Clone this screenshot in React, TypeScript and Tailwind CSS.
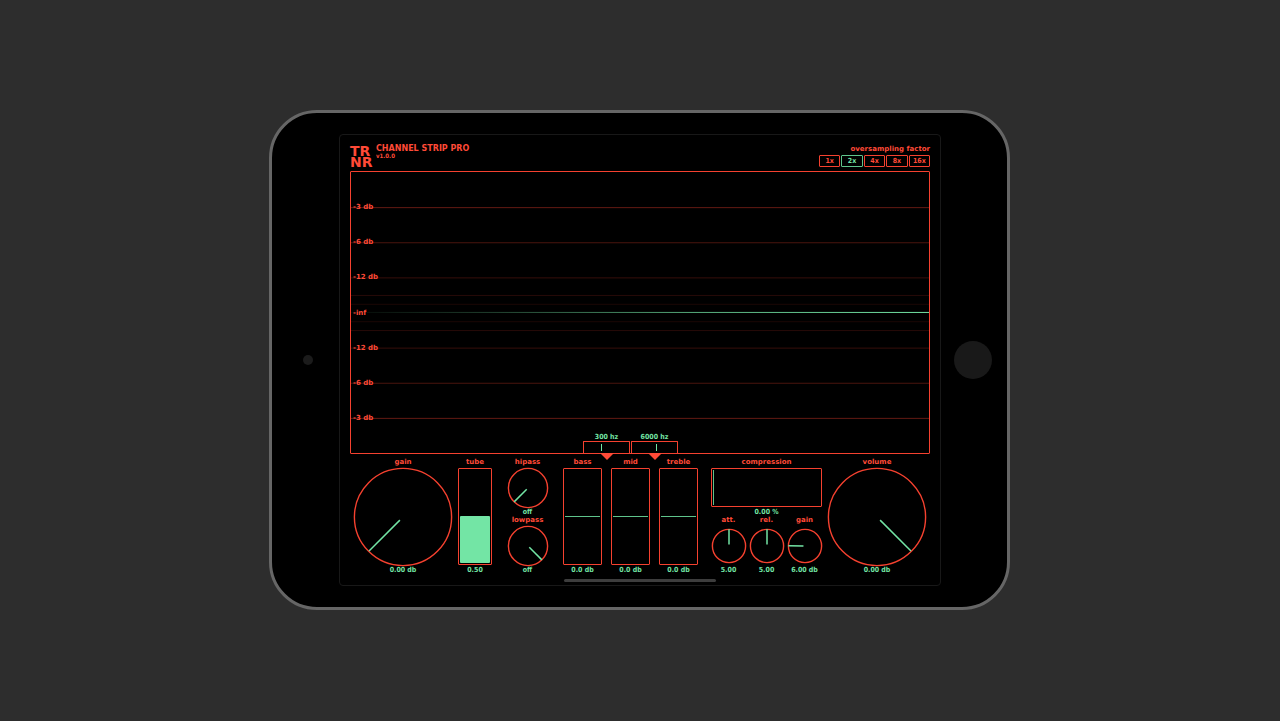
import React, { useState } from "react";

type ControlProps = {
  label: string;
  display: string;
  value: number;
};

const labelClass = "block text-center text-[7px] leading-[8px] font-bold whitespace-nowrap text-[#ff4a37]";
const valueClass =
  "block text-center font-['DejaVu_Sans_Condensed','DejaVu_Sans',sans-serif] font-stretch-condensed text-[7px] leading-[8px] font-bold whitespace-nowrap text-[#73e5a5]";
const hiddenRange = "absolute inset-0 m-0 h-full w-full cursor-pointer opacity-0";

function Dial({ label, angle, radius }: { label: string; angle: number; radius: number }) {
  const box = radius * 2;
  const rad = (angle * Math.PI) / 180;
  const dx = Math.sin(rad);
  const dy = -Math.cos(rad);
  const inner = radius * 0.09;
  const outer = radius * 0.98;
  return (
    <div className="relative flex min-h-0 w-full flex-1 items-center justify-center">
      <svg
        width={box}
        height={box}
        viewBox={`${-radius} ${-radius} ${box} ${box}`}
        className="shrink-0 overflow-visible"
        aria-hidden="true"
      >
        <circle r={radius - 0.4} fill="none" stroke="#f5412f" strokeWidth="1.4" />
        <line x1={dx * inner} y1={dy * inner} x2={dx * outer} y2={dy * outer} stroke="#73e5a5" strokeWidth="1.5" />
      </svg>
      <input type="range" aria-label={label} min={-180} max={180} defaultValue={angle} className={hiddenRange} />
    </div>
  );
}

function Knob({ label, display, value, radius }: ControlProps & { radius: number }) {
  return (
    <div className="flex h-full flex-col">
      <span className={labelClass}>{label}</span>
      <div className="mt-[2px] mb-px flex min-h-0 flex-1">
        <Dial label={label} angle={value} radius={radius} />
      </div>
      <span className={valueClass}>{display}</span>
    </div>
  );
}

function Fader({ label, display, value, filled = false }: ControlProps & { filled?: boolean }) {
  return (
    <div className="flex h-full flex-col">
      <span className={labelClass}>{label}</span>
      <div className="relative mt-[2px] mb-px flex flex-1 flex-col justify-end rounded-[1px] border border-[#f5412f] p-px">
        <div
          className={filled ? "rounded-[1px] bg-[#73e5a5]" : "border-t border-[#5fc48b]"}
          style={{ height: `${value}%` }}
        />
        <input type="range" aria-label={label} min={0} max={100} defaultValue={value} className={hiddenRange} />
      </div>
      <span className={valueClass}>{display}</span>
    </div>
  );
}

function Crossover({ label, display, value }: ControlProps) {
  return (
    <div className="relative flex w-[47px] flex-col">
      <span className={valueClass}>{display}</span>
      <div className="relative h-[12px] rounded-t-[1px] border border-b-0 border-[#f5412f] py-[2px]">
        <div className="h-[7px] w-px bg-[#73e5a5]" style={{ marginLeft: `${value}%` }} />
        <input type="range" aria-label={label} min={0} max={100} defaultValue={value} className={hiddenRange} />
      </div>
      <svg
        viewBox="0 0 14 7"
        width="14"
        height="7"
        className="absolute top-full left-1/2 -translate-x-1/2"
        aria-hidden="true"
      >
        <path d="M0 0H14L7 7Z" fill="#ff4a37" />
      </svg>
    </div>
  );
}

const gridLines = [
  { at: 12.5, opacity: 0.4 },
  { at: 25, opacity: 0.3 },
  { at: 37.5, opacity: 0.22 },
  { at: 43.75, opacity: 0.16 },
  { at: 46.9, opacity: 0.11 },
  { at: 53.1, opacity: 0.11 },
  { at: 56.25, opacity: 0.16 },
  { at: 62.5, opacity: 0.22 },
  { at: 75, opacity: 0.3 },
  { at: 87.5, opacity: 0.4 },
];

const scale = ["-3 db", "-6 db", "-12 db", "-inf", "-12 db", "-6 db", "-3 db"];

function Scope() {
  return (
    <section aria-label="Waveform" className="relative h-[283px] rounded-[1px] border border-[#f5412f]">
      <svg className="absolute inset-0 h-full w-full" aria-hidden="true">
        <defs>
          <linearGradient id="trace" x1="0" x2="1" y1="0" y2="0">
            <stop offset="0" stopColor="#73e5a5" stopOpacity="0.04" />
            <stop offset="0.25" stopColor="#73e5a5" stopOpacity="0.28" />
            <stop offset="0.6" stopColor="#73e5a5" stopOpacity="0.75" />
            <stop offset="1" stopColor="#73e5a5" />
          </linearGradient>
        </defs>
        {gridLines.map((line) => (
          <rect key={line.at} x="0" y={`${line.at}%`} width="100%" height="1" fill="#f5412f" opacity={line.opacity} />
        ))}
        <rect x="0" y="49.8%" width="100%" height="1" fill="url(#trace)" />
      </svg>
      <div className="relative flex h-full flex-col justify-center pl-[2px]">
        {scale.map((mark, i) => (
          <span key={i} className="flex h-[12.5%] items-center text-[7px] leading-[8px] font-bold text-[#ff4a37]">
            {mark}
          </span>
        ))}
      </div>
      <div className="absolute bottom-0 left-[232px] flex gap-px">
        <Crossover label="low crossover" display="300 hz" value={37} />
        <Crossover label="high crossover" display="6000 hz" value={53} />
      </div>
    </section>
  );
}

function Oversampling() {
  const [factor, setFactor] = useState("2x");
  return (
    <div className="flex flex-col items-end">
      <span id="oversampling" className="text-[7px] leading-[8px] font-bold text-[#ff4a37]">
        oversampling factor
      </span>
      <div role="group" aria-labelledby="oversampling" className="mt-[2px] grid w-[111px] grid-cols-5 gap-px">
        {["1x", "2x", "4x", "8x", "16x"].map((f) => (
          <button
            key={f}
            type="button"
            aria-pressed={factor === f}
            onClick={() => setFactor(f)}
            className={`h-[12px] rounded-[1px] border font-['DejaVu_Sans_Condensed','DejaVu_Sans',sans-serif] font-stretch-condensed text-[7px] leading-[8px] font-bold ${
              factor === f ? "border-[#5fc48b] text-[#73e5a5]" : "border-[#f5412f] text-[#ff4a37]"
            }`}
          >
            {f}
          </button>
        ))}
      </div>
    </div>
  );
}

function Compressor() {
  return (
    <div className="flex h-full w-[111px] flex-col">
      <span className={labelClass}>compression</span>
      <div className="relative mt-[2px] mb-px h-[39px] rounded-[1px] border border-[#f5412f] p-px">
        <div className="h-full w-px bg-[#5fc48b]" />
        <input type="range" aria-label="compression" min={0} max={100} defaultValue={0} className={hiddenRange} />
      </div>
      <span className={valueClass}>0.00 %</span>
      <div className="flex flex-1 justify-between">
        <div className="w-[35px]">
          <Knob label="att." display="5.00" value={0} radius={17} />
        </div>
        <div className="w-[35px]">
          <Knob label="rel." display="5.00" value={0} radius={17} />
        </div>
        <div className="w-[35px]">
          <Knob label="gain" display="6.00 db" value={-89} radius={17} />
        </div>
      </div>
    </div>
  );
}

function Controls() {
  return (
    <section aria-label="Controls" className="mt-[4px] flex h-[116px] justify-between px-[4px]">
      <div className="flex gap-[15px]">
        <div className="flex gap-[6px]">
          <div className="w-[98px]">
            <Knob label="gain" display="0.00 db" value={-135} radius={49} />
          </div>
          <div className="w-[34px]">
            <Fader label="tube" display="0.50" value={51} filled />
          </div>
        </div>
        <div className="flex w-[41px] flex-col">
          <div className="h-[58px]">
            <Knob label="hipass" display="off" value={-135} radius={20} />
          </div>
          <div className="h-[58px]">
            <Knob label="lowpass" display="off" value={135} radius={20} />
          </div>
        </div>
        <div className="grid grid-cols-[39px_39px_39px] gap-[9px]">
          <Fader label="bass" display="0.0 db" value={51} />
          <Fader label="mid" display="0.0 db" value={51} />
          <Fader label="treble" display="0.0 db" value={51} />
        </div>
      </div>
      <div className="flex gap-[6px]">
        <Compressor />
        <div className="w-[98px]">
          <Knob label="volume" display="0.00 db" value={135} radius={49} />
        </div>
      </div>
    </section>
  );
}

export default function App() {
  return (
    <main className="flex min-h-screen items-center justify-center bg-[#2d2d2d] pr-px pb-px font-['DejaVu_Sans',sans-serif]">
      <div className="flex shrink-0 items-center rounded-[48px] border-[3px] border-[#666666] bg-black py-[21px] pr-[15px] pl-[31px]">
        <div className="size-[10px] rounded-full bg-[#1b1b1b]" />
        <div className="ml-[26px] w-[602px] rounded-[4px] border border-[#181818] px-[10px] pb-[3px]">
          <header className="flex justify-between pt-[10px]">
            <div className="flex gap-[4px]">
              <div className="w-[22px] text-[14px] leading-[11px] font-bold text-[#ff4a37]">
                <div className="mt-px">TR</div>
                <div>NR</div>
              </div>
              <div className="font-bold text-[#ff4a37]">
                <h1 className="text-[8px] leading-[8px] font-bold">CHANNEL STRIP PRO</h1>
                <p className="font-['DejaVu_Sans_Condensed','DejaVu_Sans',sans-serif] font-stretch-condensed text-[6px] leading-[6px]">
                  v1.0.0
                </p>
              </div>
            </div>
            <Oversampling />
          </header>
          <div className="pt-[3px]">
            <Scope />
          </div>
          <Controls />
          <div className="mx-auto mt-[5px] h-[3px] w-[152px] rounded-full bg-[#3d3d3d]" />
        </div>
        <button type="button" aria-label="Home" className="ml-[13px] size-[38px] rounded-full bg-[#191919]" />
      </div>
    </main>
  );
}
